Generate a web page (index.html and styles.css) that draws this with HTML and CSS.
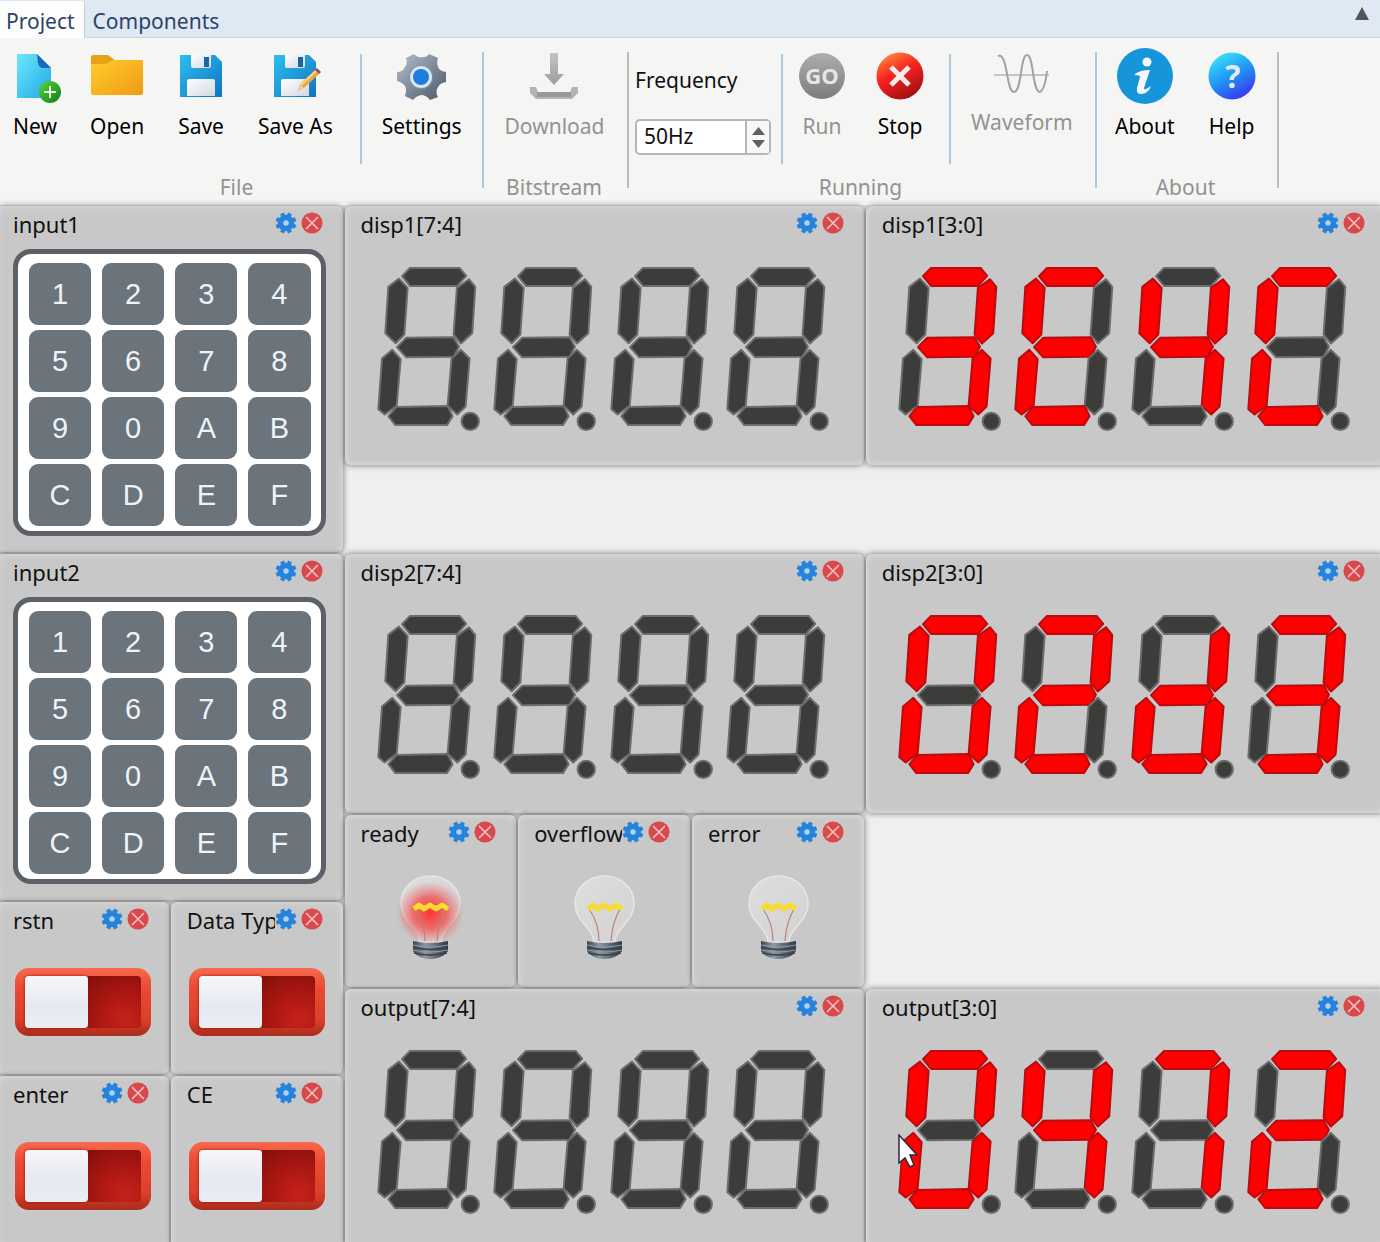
FILE: index.html
```html
<!DOCTYPE html>
<html lang="en">
<head>
<meta charset="utf-8">
<title>Project</title>
<link rel="stylesheet" href="styles.css">
</head>
<body>
<svg class="defs" aria-hidden="true">
  <defs>
    <linearGradient id="gPage" x1="0" y1="0" x2="1" y2="1"><stop offset="0" stop-color="#6fe6fc"/><stop offset="1" stop-color="#1fa9e6"/></linearGradient>
    <linearGradient id="gPlus" x1="0" y1="0" x2="1" y2="1"><stop offset="0" stop-color="#5bd83c"/><stop offset="1" stop-color="#0c7a16"/></linearGradient>
    <linearGradient id="gFolder" x1="0" y1="0" x2="1" y2="1"><stop offset="0" stop-color="#ffcd2e"/><stop offset="1" stop-color="#f09a12"/></linearGradient>
    <linearGradient id="gDisk" x1="0" y1="0" x2="1" y2="1"><stop offset="0" stop-color="#2bc0ee"/><stop offset="1" stop-color="#1173c4"/></linearGradient>
    <linearGradient id="gPaper" x1="0" y1="0" x2="1" y2="1"><stop offset="0" stop-color="#ffffff"/><stop offset="1" stop-color="#d2d7e2"/></linearGradient>
    <linearGradient id="gSteel" x1="0" y1="0" x2="1" y2="1"><stop offset="0" stop-color="#b3bfcc"/><stop offset="1" stop-color="#4c5867"/></linearGradient>
    <linearGradient id="gGo" x1="0" y1="0" x2="0" y2="1"><stop offset="0" stop-color="#adadad"/><stop offset="1" stop-color="#7d7d7d"/></linearGradient>
    <linearGradient id="gStop" x1="0.2" y1="0" x2="0.7" y2="1"><stop offset="0" stop-color="#ff8a3c"/><stop offset="0.45" stop-color="#f8201f"/><stop offset="1" stop-color="#9c1010"/></linearGradient>
    <linearGradient id="gHelp" x1="0.2" y1="0" x2="0.75" y2="1"><stop offset="0" stop-color="#3be6fb"/><stop offset="0.5" stop-color="#1f96f4"/><stop offset="1" stop-color="#3c2ff0"/></linearGradient>
    <linearGradient id="gArrow" x1="0" y1="0" x2="0" y2="1"><stop offset="0" stop-color="#c4c4c4"/><stop offset="1" stop-color="#9c9c9c"/></linearGradient>
    <linearGradient id="gGlass" x1="0" y1="0" x2="1" y2="1"><stop offset="0" stop-color="#dededf"/><stop offset="1" stop-color="#d2d2d3"/></linearGradient>
    <linearGradient id="gCap" x1="0" y1="0" x2="1" y2="0"><stop offset="0" stop-color="#39434e"/><stop offset="0.35" stop-color="#8e9aa7"/><stop offset="1" stop-color="#2e3742"/></linearGradient>
    <radialGradient id="gGlow"><stop offset="0" stop-color="#ff3434"/><stop offset="0.5" stop-color="#f24a4a" stop-opacity="0.75"/><stop offset="1" stop-color="#e66" stop-opacity="0"/></radialGradient>
  </defs>
  <symbol id="disk" viewBox="0 0 44 44">
    <path d="M1 1h35l7 7v35H1z" fill="url(#gDisk)"/>
    <path d="M12 1h20v11q0 2-2 2H14q-2 0-2-2z" fill="url(#gPaper)"/>
    <rect x="25" y="3" width="5" height="10" fill="#1765a8"/>
    <path d="M8 42V27q0-2 2-2h24q2 0 2 2v15z" fill="url(#gPaper)"/>
  </symbol>
  <symbol id="gear" viewBox="-12 -12 24 24">
    <g fill="none" stroke="#2583de" stroke-width="4.500" stroke-linejoin="round">
      <path d="M-4.300-10.500L4.300 10.500M4.300-10.500L-4.300 10.500M-10.500-4.300L10.500 4.300M-10.500 4.300L10.500-4.300"/>
    </g>
    <circle r="9" fill="#2583de"/>
    <circle r="3" fill="#b4d0e8"/>
  </symbol>
  <symbol id="cross" viewBox="-12 -12 24 24">
    <circle r="11.500" fill="#d9484a"/>
    <path d="M-6-6L6 6M6-6L-6 6" stroke="#f3c3c3" stroke-width="1.800" stroke-linecap="round"/>
  </symbol>
  <symbol id="seven" viewBox="88 176 350 512">
    <g stroke-width="6" stroke-linejoin="round">
      <path class="sa" d="M169 212L193 187H342L362 211L334 241H193Z"/>
      <path class="sf" d="M160 219L186 247L176 387L150 413L119 383L128 244Z"/>
      <path class="sb" d="M370 221L389 244L380 383L346 414L324 387L334 247Z"/>
      <path class="sg" d="M154 425L181 397L324 395L340 424L324 454L181 455Z"/>
      <path class="se" d="M140 433L165 461L153 601L117 627L98 611L109 459Z"/>
      <path class="sc" d="M346 433L372 459L360 603L335 627L306 601L318 459Z"/>
      <path class="sd" d="M128 632L152 605L306 602L321 632L304 659H149Z"/>
      <circle cx="374" cy="648" r="26" fill="#3c3c3b" stroke="#6c6c6c"/>
    </g>
  </symbol>
  <symbol id="bulb" viewBox="0 0 68 84">
    <path d="M24 67C23 52 5 47 5 28A29.500 27 0 0 1 64 28C64 47 46 52 45 67Z" fill="url(#gGlass)" stroke="#e6e6e6" stroke-width="1.500"/>
    <ellipse class="glow" cx="34" cy="38" rx="34" ry="32" fill="url(#gGlow)"/>
    <path d="M19 34Q29 48 29 66M50 34Q42 48 41 66" fill="none" stroke="#b98573" stroke-width="1.200"/>
    <path d="M18 34l5-4 5 4 6-4 6 4 6-4 6 4" fill="none" stroke="#f7df24" stroke-width="5" stroke-linejoin="round"/>
    <path d="M20 31l4 1 4-1 6 1 6-1 6 1" fill="none" stroke="#ffd04a" stroke-width="1.500"/>
    <path d="M17 66Q34 70 52 66V76Q46 84 34 84Q23 84 17 76Z" fill="url(#gCap)"/>
    <path d="M17 70Q34 74 52 70M17 75Q34 79 52 75" fill="none" stroke="#8e98a3" stroke-width="1.200"/>
    <path d="M17 72Q34 77 52 72M18 78Q34 82 51 78" fill="none" stroke="#3a424c" stroke-width="1.500"/>
  </symbol>
</svg>

<nav class="tabs">
  <a class="tab active" href="#project">Project</a>
  <a class="tab" href="#components">Components</a>
  <button class="collapse" aria-label="Collapse ribbon"><svg width="16" height="14" viewBox="0 0 16 14"><path d="M8 0L15 13H1Z" fill="#555"/></svg></button>
</nav>

<header class="ribbon" id="project">
  <section class="group file">
    <div class="tools">
      <button class="tool"><svg width="48" height="50" viewBox="-4 0 48 50"><path d="M2 0H22L36 14V44H2Z" fill="url(#gPage)"/><path d="M22 0L36 14H27Q24 13 23 9Z" fill="#1769c0"/><circle cx="35" cy="38" r="11" fill="url(#gPlus)"/><path d="M35 32V44M29 38H41" stroke="#e8f5df" stroke-width="2"/></svg>New</button>
      <button class="tool"><svg width="52" height="50" viewBox="0 0 52 50"><path d="M0 3Q0 1 2 1H17L24 6H50Q52 6 52 8V20H0Z" fill="#e6a317"/><path d="M0 10H15L22 6H50Q52 6 52 8V39Q52 41 50 41H2Q0 41 0 39Z" fill="url(#gFolder)"/></svg>Open</button>
      <button class="tool"><svg width="44" height="50" viewBox="0 3 44 50"><use href="#disk" width="44" height="50"/></svg>Save</button>
      <button class="tool"><svg width="50" height="50" viewBox="-3 3 50 50"><use href="#disk" width="44" height="50"/><path d="M25 40L27 33L42 19L46 23L31 37Z" fill="#e9a73e"/><path d="M28 34L43 20" stroke="#ffd487" stroke-width="2"/><path d="M25 40L27 33L31 37Z" fill="#e4cfa8"/><path d="M42 19L44 17L48 21L46 23Z" fill="#a04b50"/></svg>Save As</button>
      <span class="rule"></span>
      <button class="tool settings"><svg width="50" height="50" viewBox="0 0 50 50"><path d="M17 0Q20 4 24 3Q29 4 32 0L41 4Q39 10 42 15Q45 18 49 18V28Q43 29 41 33Q38 38 41 43L33 46Q29 41 24 41Q19 42 16 46L8 42Q10 36 8 32Q5 28 0 27V18Q6 18 8 13Q11 9 9 4Z" fill="url(#gSteel)"/><circle cx="24" cy="23" r="12" fill="#7c91aa"/><circle cx="24" cy="23" r="11" fill="#d9e6f4"/><circle cx="24" cy="23" r="8" fill="#1c7fe0"/></svg>Settings</button>
    </div>
    <h2>File</h2>
  </section>
  <section class="group bitstream">
    <div class="tools">
      <button class="tool" disabled><svg width="50" height="50" viewBox="0 0 50 50"><path d="M21 -1H29V20H35L25 31L15 20H21Z" fill="url(#gArrow)"/><path d="M1 33H7L9 38H41L43 33H49V39L43 45H7L1 39Z" fill="#b4b4b4"/><path d="M8 38H42V43H8Z" fill="#989898"/></svg>Download</button>
    </div>
    <h2>Bitstream</h2>
  </section>
  <section class="group running">
    <div class="tools">
      <div class="frequency">
        <label for="freq">Frequency</label>
        <div class="spin">
          <input id="freq" type="text" value="50Hz">
          <div class="steps">
            <button aria-label="Increase"><svg width="13" height="8" viewBox="0 0 13 8"><path d="M6.500 0L13 8H0Z" fill="#606060"/></svg></button>
            <button aria-label="Decrease"><svg width="13" height="8" viewBox="0 0 13 8"><path d="M0 0H13L6.500 8Z" fill="#606060"/></svg></button>
          </div>
        </div>
      </div>
      <span class="rule"></span>
      <button class="tool" disabled><svg width="48" height="50" viewBox="0 0 48 50"><circle cx="24" cy="22" r="23" fill="url(#gGo)"/><text x="24" y="30" class="go">GO</text></svg>Run</button>
      <button class="tool"><svg width="48" height="50" viewBox="0 0 48 50"><circle cx="24" cy="22" r="23.500" fill="url(#gStop)"/><path d="M15 13L33 31M33 13L15 31" stroke="#f6eeee" stroke-width="5"/></svg>Stop</button>
      <span class="rule"></span>
      <button class="tool wave" disabled><svg width="56" height="46" viewBox="0 0 56 46"><path d="M0 21H55" stroke="#c6c6c6" stroke-width="2"/><path d="M4 2C14-2 12 38 20 38S26 1 33 1S38 38 46 38Q51 35 53 17" fill="none" stroke="#a2a2a2" stroke-width="2"/></svg>Waveform</button>
    </div>
    <h2>Running</h2>
  </section>
  <section class="group about">
    <div class="tools">
      <button class="tool"><svg width="56" height="50" viewBox="0 0 56 50"><circle cx="28" cy="22" r="28" fill="#1795da"/><circle cx="30" cy="8" r="4.500" fill="#f2f8fc"/><path d="M18 20Q23 16 33 16L27 34Q27 36 29 35L34 32Q31 40 24 40Q19 40 20 34L23 23Q23 21 18 21Z" fill="#f2f8fc"/></svg>About</button>
      <button class="tool"><svg width="48" height="50" viewBox="0 0 48 50"><circle cx="24" cy="22" r="23.500" fill="url(#gHelp)"/><text x="25" y="34" class="mark">?</text></svg>Help</button>
    </div>
    <h2>About</h2>
  </section>
</header>

<main class="board">
  <article class="card input1">
    <header><h3>input1</h3><button aria-label="Configure"><svg><use href="#gear"/></svg></button><button aria-label="Remove"><svg><use href="#cross"/></svg></button></header>
    <div class="keypad"><button>1</button><button>2</button><button>3</button><button>4</button><button>5</button><button>6</button><button>7</button><button>8</button><button>9</button><button>0</button><button>A</button><button>B</button><button>C</button><button>D</button><button>E</button><button>F</button></div>
  </article>
  <article class="card disp1h">
    <header><h3>disp1[7:4]</h3><button aria-label="Configure"><svg><use href="#gear"/></svg></button><button aria-label="Remove"><svg><use href="#cross"/></svg></button></header>
    <div class="digits"><svg><use href="#seven"/></svg><svg><use href="#seven"/></svg><svg><use href="#seven"/></svg><svg><use href="#seven"/></svg></div>
  </article>
  <article class="card disp1l">
    <header><h3>disp1[3:0]</h3><button aria-label="Configure"><svg><use href="#gear"/></svg></button><button aria-label="Remove"><svg><use href="#cross"/></svg></button></header>
    <div class="digits"><svg class="a b c d g"><use href="#seven"/></svg><svg class="a d e f g"><use href="#seven"/></svg><svg class="b c f g"><use href="#seven"/></svg><svg class="a d e f"><use href="#seven"/></svg></div>
  </article>
  <article class="card input2">
    <header><h3>input2</h3><button aria-label="Configure"><svg><use href="#gear"/></svg></button><button aria-label="Remove"><svg><use href="#cross"/></svg></button></header>
    <div class="keypad"><button>1</button><button>2</button><button>3</button><button>4</button><button>5</button><button>6</button><button>7</button><button>8</button><button>9</button><button>0</button><button>A</button><button>B</button><button>C</button><button>D</button><button>E</button><button>F</button></div>
  </article>
  <article class="card disp2h">
    <header><h3>disp2[7:4]</h3><button aria-label="Configure"><svg><use href="#gear"/></svg></button><button aria-label="Remove"><svg><use href="#cross"/></svg></button></header>
    <div class="digits"><svg><use href="#seven"/></svg><svg><use href="#seven"/></svg><svg><use href="#seven"/></svg><svg><use href="#seven"/></svg></div>
  </article>
  <article class="card disp2l">
    <header><h3>disp2[3:0]</h3><button aria-label="Configure"><svg><use href="#gear"/></svg></button><button aria-label="Remove"><svg><use href="#cross"/></svg></button></header>
    <div class="digits"><svg class="a b c d e f"><use href="#seven"/></svg><svg class="a b d e g"><use href="#seven"/></svg><svg class="b c d e g"><use href="#seven"/></svg><svg class="a b c d g"><use href="#seven"/></svg></div>
  </article>
  <article class="card ready">
    <header><h3>ready</h3><button aria-label="Configure"><svg><use href="#gear"/></svg></button><button aria-label="Remove"><svg><use href="#cross"/></svg></button></header>
    <svg class="bulb lit"><use href="#bulb"/></svg>
  </article>
  <article class="card overflow">
    <header><h3>overflow</h3><button aria-label="Configure"><svg><use href="#gear"/></svg></button><button aria-label="Remove"><svg><use href="#cross"/></svg></button></header>
    <svg class="bulb"><use href="#bulb"/></svg>
  </article>
  <article class="card error">
    <header><h3>error</h3><button aria-label="Configure"><svg><use href="#gear"/></svg></button><button aria-label="Remove"><svg><use href="#cross"/></svg></button></header>
    <svg class="bulb"><use href="#bulb"/></svg>
  </article>
  <article class="card rstn">
    <header><h3><label for="sw1">rstn</label></h3><button aria-label="Configure"><svg><use href="#gear"/></svg></button><button aria-label="Remove"><svg><use href="#cross"/></svg></button></header>
    <input class="switch" id="sw1" type="checkbox">
  </article>
  <article class="card datatype">
    <header><h3><label for="sw2">Data Type</label></h3><button aria-label="Configure"><svg><use href="#gear"/></svg></button><button aria-label="Remove"><svg><use href="#cross"/></svg></button></header>
    <input class="switch" id="sw2" type="checkbox">
  </article>
  <article class="card enter">
    <header><h3><label for="sw3">enter</label></h3><button aria-label="Configure"><svg><use href="#gear"/></svg></button><button aria-label="Remove"><svg><use href="#cross"/></svg></button></header>
    <input class="switch" id="sw3" type="checkbox">
  </article>
  <article class="card ce">
    <header><h3><label for="sw4">CE</label></h3><button aria-label="Configure"><svg><use href="#gear"/></svg></button><button aria-label="Remove"><svg><use href="#cross"/></svg></button></header>
    <input class="switch" id="sw4" type="checkbox">
  </article>
  <article class="card outh">
    <header><h3>output[7:4]</h3><button aria-label="Configure"><svg><use href="#gear"/></svg></button><button aria-label="Remove"><svg><use href="#cross"/></svg></button></header>
    <div class="digits"><svg><use href="#seven"/></svg><svg><use href="#seven"/></svg><svg><use href="#seven"/></svg><svg><use href="#seven"/></svg></div>
  </article>
  <article class="card outl">
    <header><h3>output[3:0]</h3><button aria-label="Configure"><svg><use href="#gear"/></svg></button><button aria-label="Remove"><svg><use href="#cross"/></svg></button></header>
    <div class="digits"><svg class="a b c d e f"><use href="#seven"/></svg><svg class="b c f g"><use href="#seven"/></svg><svg class="a b c"><use href="#seven"/></svg><svg class="a b d e g"><use href="#seven"/></svg></div>
    <svg class="pointer" viewBox="0 0 20 34"><path d="M1 1V29L7 24L12 33L16 31L12 21H19Z" fill="#fff" stroke="#2a2a3a" stroke-width="1.500"/></svg>
  </article>
</main>
</body>
</html>
```
FILE: styles.css
```css
* { box-sizing: border-box; }
html, body { height: 100%; }
body {
  margin: 0;
  display: flex;
  flex-direction: column;
  overflow: hidden;
  background: #efefef;
  color: #111;
  font: 21px/28px "Noto Sans", "Open Sans", sans-serif;
}
button { font: inherit; color: inherit; background: none; border: 0; padding: 0; }
h2, h3 { margin: 0; font-weight: 400; }
.defs { position: absolute; width: 0; height: 0; }

/* Tabs */
.tabs {
  flex: none;
  display: flex;
  height: 38px;
  background: #dfe9f4;
  border-bottom: 1px solid #ccd5de;
}
.tab {
  padding: 7px 8px 0;
  color: #2c4466;
  text-decoration: none;
}
.tab.active {
  height: 38px;
  margin-top: 1px;
  padding: 6px 9px 0 6px;
  background: #fdfdfd;
  border-right: 1px solid #c3ccd6;
  border-radius: 0 3px 0 0;
}
.collapse { margin: 0 10px 10px auto; line-height: 0; }

/* Ribbon */
.ribbon {
  flex: none;
  display: flex;
  height: 167px;
  background: #f5f5f4;
  border-bottom: 2px solid #fbfdff;
}
.group {
  display: flex;
  flex-direction: column;
  justify-content: space-between;
  position: relative;
}
.group::after {
  content: "";
  position: absolute;
  right: 0;
  top: 14px;
  width: 2px;
  height: 136px;
  background: #a9c8e2;
}
.bitstream::after, .about::after { background: #b9bbbd; }
.group h2 {
  font-size: 21px;
  line-height: 28px;
  text-align: center;
  color: #929292;
  padding: 0 5px 2px 0;
}
.tools { display: flex; padding-top: 16px; }
.tool {
  flex: none;
  display: flex;
  flex-direction: column;
  align-items: center;
  padding: 0 15px;
  line-height: 28px;
  color: #000;
}
.tool svg { overflow: visible; margin-bottom: 8px; }
.tool:disabled { color: #929292; }
.file { width: 484px; }
.file .tool { padding: 0 17px; }
.file .tool:first-child { padding: 0 14px 0 11px; }
.file .settings { padding: 0 20px; }
.group.file h2 { padding-right: 11px; }
.rule { width: 2px; height: 110px; margin-left: 10px; background: #a9c8e2; }
.bitstream { width: 145px; }
.bitstream .tools { justify-content: center; padding-right: 4px; }
.running { width: 468px; }
.running .rule + .tool { padding-left: 15px; }
.running .rule + .wave { padding-left: 20px; }
.about { width: 182px; }
.about .tool { padding: 0 15px 0 18px; }
.go { font: 700 22px "Open Sans", sans-serif; fill: #e6e6e6; text-anchor: middle; }
.mark { font: 700 32px "Open Sans", sans-serif; fill: #dfecf8; text-anchor: middle; }

.frequency { padding: 12px 0 0 6px; }
.frequency label { display: block; margin-bottom: 25px; }
.spin {
  display: flex;
  width: 136px;
  height: 36px;
  background: #fff;
  border: 2px solid #b5b5b5;
  border-radius: 5px;
}
.spin input {
  flex: 1;
  min-width: 0;
  border: 0;
  padding: 0 7px 2px;
  background: none;
  font: inherit;
  color: #111;
}
.steps {
  display: flex;
  flex-direction: column;
  justify-content: center;
  gap: 5px;
  width: 24px;
  border-left: 2px solid #b5b5b5;
  background: #f7f7f7;
}
.steps button { line-height: 0; }
.steps svg { display: block; margin: 0 auto; }

/* Board: eight equal columns, rows of half a tile */
.board {
  flex: 1;
  min-height: 0;
  display: grid;
  grid-template-columns: repeat(8, minmax(0, 1fr));
  grid-template-rows: repeat(12, 87px);
  margin: 0 -6px 0 -4px;
}
.card {
  position: relative;
  display: flex;
  flex-direction: column;
  margin: 1px;
  border-radius: 6px;
  background: #c8c8c8;
  box-shadow: 0 0 6px rgba(0, 0, 0, .55), inset 0 0 7px rgba(235, 235, 235, .7);
}
.input1 { grid-area: 1 / 1 / span 4 / span 2; }
.input2 { grid-area: 5 / 1 / span 4 / span 2; }
.disp1h { grid-area: 1 / 3 / span 3 / span 3; }
.disp1l { grid-area: 1 / 6 / span 3 / span 3; }
.disp2h { grid-area: 5 / 3 / span 3 / span 3; }
.disp2l { grid-area: 5 / 6 / span 3 / span 3; }
.ready { grid-area: 8 / 3 / span 2 / span 1; }
.overflow { grid-area: 8 / 4 / span 2 / span 1; }
.error { grid-area: 8 / 5 / span 2 / span 1; }
.rstn { grid-area: 9 / 1 / span 2 / span 1; }
.datatype { grid-area: 9 / 2 / span 2 / span 1; }
.enter { grid-area: 11 / 1 / span 2 / span 1; }
.ce { grid-area: 11 / 2 / span 2 / span 1; }
.outh { grid-area: 10 / 3 / span 3 / span 3; }
.outl { grid-area: 10 / 6 / span 3 / span 3; }

.card header {
  flex: none;
  display: flex;
  height: 43px;
  padding: 3px 20px 0 16px;
}
.card h3 {
  flex: 1;
  min-width: 0;
  overflow: hidden;
  white-space: nowrap;
  font-size: 22px;
  line-height: 30px;
}
.card header button { flex: none; height: 22px; margin-top: 3px; line-height: 0; }
.card header button + button { margin-left: 4px; }
.card header svg { width: 22px; height: 22px; }

/* Keypad */
.keypad {
  flex: 1;
  display: grid;
  grid-template-columns: repeat(4, 1fr);
  grid-template-rows: repeat(4, 1fr);
  gap: 5px 11px;
  margin: 0 17px 16px 16px;
  padding: 9px 10px 5px 11px;
  border: 5px solid #5b6167;
  border-radius: 18px;
  background: #fff;
}
.keypad button {
  border-radius: 9px;
  background: #6b737b;
  color: #eef3f8;
  font: 29px/32px "Liberation Sans", Arial, sans-serif;
}

/* Seven segment display */
.digits {
  display: flex;
  padding: 15px 23px 0 30px;
}
.digits svg { flex: 1; min-width: 0; height: 171px; }
.sa { fill: var(--a, #3c3c3b); stroke: var(--ae, #6c6c6c); }
.sb { fill: var(--b, #3c3c3b); stroke: var(--be, #6c6c6c); }
.sc { fill: var(--c, #3c3c3b); stroke: var(--ce, #6c6c6c); }
.sd { fill: var(--d, #3c3c3b); stroke: var(--de, #6c6c6c); }
.se { fill: var(--e, #3c3c3b); stroke: var(--ee, #6c6c6c); }
.sf { fill: var(--f, #3c3c3b); stroke: var(--fe, #6c6c6c); }
.sg { fill: var(--g, #3c3c3b); stroke: var(--ge, #6c6c6c); }
.a { --a: #fe0000; --ae: #b80c10; }
.b { --b: #fe0000; --be: #b80c10; }
.c { --c: #fe0000; --ce: #b80c10; }
.d { --d: #fe0000; --de: #b80c10; }
.e { --e: #fe0000; --ee: #b80c10; }
.f { --f: #fe0000; --fe: #b80c10; }
.g { --g: #fe0000; --ge: #b80c10; }

/* Lamps */
.bulb { width: 68px; height: 84px; margin: 17px auto 0; --glow: 0; }
.bulb.lit { --glow: 1; }
.glow { opacity: var(--glow); }

/* Switches */
.switch {
  appearance: none;
  flex: none;
  height: 68px;
  margin: 23px 18px 0;
  padding: 8px 10px;
  border-radius: 14px;
  background: linear-gradient(#f8694f, #ea4a31 30%, #dc3f2a 75%, #a82c1c);
  display: flex;
}
.switch::before {
  content: "";
  flex: 1;
  border-radius: 4px;
  background: linear-gradient(#f6f7fb, #e6e8f0 60%, #eceef4);
  box-shadow: 0 0 3px #8c1510;
}
.switch::after {
  content: "";
  flex: 0 0 53px;
  border-radius: 0 4px 4px 0;
  background: radial-gradient(circle at 70% 85%, #c5231b, #a91611 50%, #820f0b);
}
.switch:checked { flex-direction: row-reverse; }

.pointer { position: absolute; left: 32px; top: 145px; width: 20px; height: 34px; }
```
